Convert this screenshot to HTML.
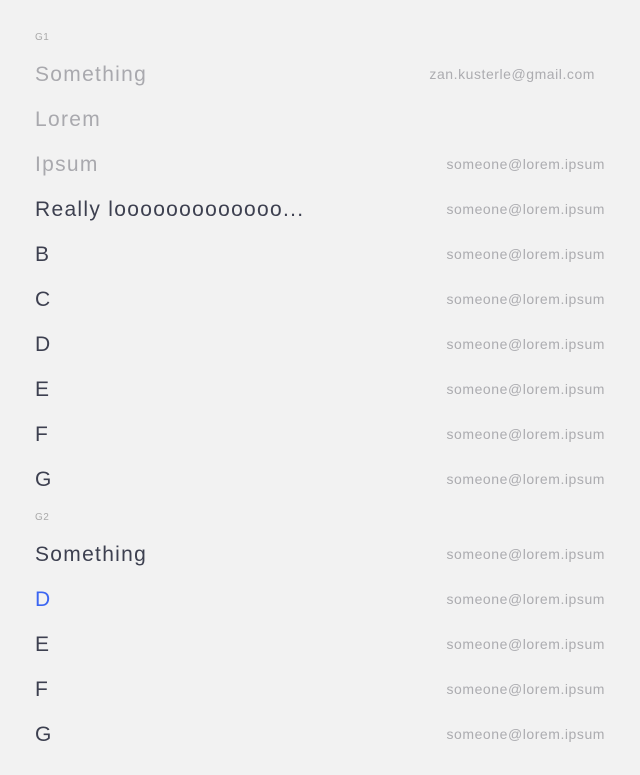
<!DOCTYPE html>
<html><head><meta charset="utf-8"><style>
html,body{margin:0;padding:0;background:#f2f2f2;width:640px;height:775px;overflow:hidden;font-family:"Liberation Sans",sans-serif}
.r{position:absolute;left:35px;height:24px;line-height:24px;font-size:21px;letter-spacing:1.3px;color:#3d4050;white-space:nowrap}
.e{position:absolute;right:35px;height:20px;line-height:20px;font-size:14px;color:#acacb0;white-space:nowrap;letter-spacing:0.55px}
.g{position:absolute;left:35px;font-size:10px;color:#aaa;line-height:12px;letter-spacing:0.5px}
.dim{color:#a9a9ae}
.blue{color:#3c66f2}
</style></head><body>
<div class="g" style="top:32px">G1</div>
<div class="r dim" style="top:63px">Something</div><div class="e" style="top:64px;right:45px">zan.kusterle@gmail.com</div>
<div class="r dim" style="top:108px">Lorem</div>
<div class="r dim" style="top:153px">Ipsum</div><div class="e" style="top:154px">someone@lorem.ipsum</div>
<div class="r" style="top:198px">Really looooooooooooo...</div><div class="e" style="top:199px">someone@lorem.ipsum</div>
<div class="r" style="top:243px">B</div><div class="e" style="top:244px">someone@lorem.ipsum</div>
<div class="r" style="top:288px">C</div><div class="e" style="top:289px">someone@lorem.ipsum</div>
<div class="r" style="top:333px">D</div><div class="e" style="top:334px">someone@lorem.ipsum</div>
<div class="r" style="top:378px">E</div><div class="e" style="top:379px">someone@lorem.ipsum</div>
<div class="r" style="top:423px">F</div><div class="e" style="top:424px">someone@lorem.ipsum</div>
<div class="r" style="top:468px">G</div><div class="e" style="top:469px">someone@lorem.ipsum</div>
<div class="g" style="top:512px">G2</div>
<div class="r" style="top:543px">Something</div><div class="e" style="top:544px">someone@lorem.ipsum</div>
<div class="r blue" style="top:588px">D</div><div class="e" style="top:589px">someone@lorem.ipsum</div>
<div class="r" style="top:633px">E</div><div class="e" style="top:634px">someone@lorem.ipsum</div>
<div class="r" style="top:678px">F</div><div class="e" style="top:679px">someone@lorem.ipsum</div>
<div class="r" style="top:723px">G</div><div class="e" style="top:724px">someone@lorem.ipsum</div>
</body></html>
